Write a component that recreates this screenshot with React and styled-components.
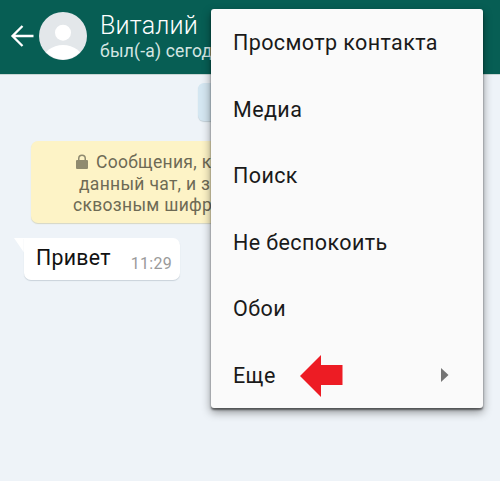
import React from "react";
import styled, { createGlobalStyle } from "styled-components";

const Global = createGlobalStyle`
  html, body { margin: 0; padding: 0; }
  body { font-family: Roboto, "Liberation Sans", sans-serif; background: #eef3f8; }
`;

const Screen = styled.div`
  position: relative;
  width: 500px;
  height: 481px;
  overflow: hidden;
  background: #eef3f8;
  display: flex;
  flex-direction: column;
`;

const Header = styled.header`
  height: 75px;
  flex: none;
  background: #075e54;
  display: flex;
  align-items: center;
  padding: 0 0 3px 10px;
  box-sizing: border-box;
  color: #fff;
  border-bottom: 1px solid #c9d6d4;
`;

const BackIcon = styled.svg`
  width: 24px;
  height: 24px;
  flex: none;
  margin-right: 5px;
`;

const AvatarIcon = styled.svg`
  width: 48px;
  height: 48px;
  flex: none;
  margin-right: 13px;
`;

const Titles = styled.div`
  display: flex;
  flex-direction: column;
  white-space: nowrap;
`;

const Name = styled.div`
  font-size: 25px;
  font-weight: 300;
  line-height: 31px;
  letter-spacing: 0.2px;
`;

const Status = styled.div`
  font-size: 17.5px;
  line-height: 21px;
  color: #d5e6e3;
  letter-spacing: 0.2px;
`;

const Chat = styled.main`
  display: flex;
  flex-direction: column;
  padding-top: 8px;
`;

const DateChip = styled.div`
  align-self: center;
  width: 104px;
  height: 38px;
  border-radius: 6px;
  background: #d4e6f1;
  box-shadow: 0 1px 1px #c3d0d8;
`;

const Notice = styled.div`
  align-self: center;
  width: 438px;
  height: 82px;
  margin-top: 20px;
  box-sizing: border-box;
  padding-top: 11px;
  border-radius: 7px;
  background: #fdf3c6;
  box-shadow: 0 1px 1px #d5d6c4;
  color: #6d6a55;
  font-size: 17.5px;
  line-height: 21.5px;
  letter-spacing: 0.3px;
  white-space: nowrap;
`;

const NoticeLine = styled.div`
  padding-left: ${(p) => p.$indent}px;
`;

const Lock = styled.svg`
  width: 12px;
  height: 15px;
  margin-right: 8px;
  vertical-align: -1px;
`;

const IncomingRow = styled.div`
  display: flex;
  margin: 15px 0 0 14px;
`;

const Tail = styled.svg`
  width: 11px;
  height: 16px;
  flex: none;
`;

const Bubble = styled.div`
  width: 156px;
  height: 42px;
  margin-left: -1px;
  box-sizing: border-box;
  padding: 0 8px 0 12px;
  background: #fff;
  border-radius: 0 7px 7px 7px;
  box-shadow: 0 1px 1px #c9d2da;
  display: flex;
  justify-content: space-between;
`;

const Message = styled.span`
  font-size: 21.3px;
  line-height: 40px;
  color: #111;
  letter-spacing: 0.3px;
`;

const Time = styled.span`
  align-self: flex-end;
  font-size: 16px;
  line-height: 32px;
  color: #9a9a9a;
  letter-spacing: 0.3px;
`;

const Menu = styled.nav`
  position: absolute;
  left: 211px;
  top: 9px;
  width: 272px;
  height: 399px;
  background: #fafafa;
  border-radius: 3px;
  box-shadow: 0 2px 2px rgba(0, 0, 0, 0.5), 0 4px 10px rgba(0, 0, 0, 0.42);
  display: grid;
  grid-auto-rows: 1fr;
`;

const MenuItem = styled.div`
  display: flex;
  align-items: center;
  justify-content: space-between;
  padding: 1px 34px 0 22px;
  font-size: 21.5px;
  letter-spacing: 0.4px;
  color: #1a1a1a;
`;

const Caret = styled.svg`
  width: 8px;
  height: 14px;
`;

const RedArrow = styled.svg`
  position: absolute;
  left: 300px;
  top: 355px;
  width: 43px;
  height: 42px;
`;

const items = ["Просмотр контакта", "Медиа", "Поиск", "Не беспокоить", "Обои"];

export default function App() {
  return (
    <Screen>
      <Global />
      <Header>
        <BackIcon viewBox="0 0 24 24" fill="none" stroke="#fff" strokeWidth="2.3">
          <path d="M23.500 12H2.500M12.500 2 2.500 12l10 10" />
        </BackIcon>
        <AvatarIcon viewBox="0 0 48 48">
          <defs>
            <clipPath id="avatar-clip">
              <circle cx="24" cy="24" r="23.5" />
            </clipPath>
          </defs>
          <circle cx="24" cy="24" r="24" fill="#e3e7ea" />
          <g clipPath="url(#avatar-clip)" fill="#fff">
            <circle cx="24" cy="20.700" r="8" />
            <ellipse cx="24" cy="48" rx="20" ry="15" />
          </g>
        </AvatarIcon>
        <Titles>
          <Name>Виталий</Name>
          <Status>был(-а) сегод</Status>
        </Titles>
      </Header>
      <Chat>
        <DateChip />
        <Notice>
          <NoticeLine $indent={45}>
            <Lock viewBox="0 0 12 15">
              <path
                d="M1 6h1V4.500a4 4 0 0 1 8 0V6h1a1 1 0 0 1 1 1v7a1 1 0 0 1-1 1H1a1 1 0 0 1-1-1V7a1 1 0 0 1 1-1zm2.500 0h5V4.500a2.500 2.500 0 0 0-5 0z"
                fill="#8f8a6f"
              />
            </Lock>
            Сообщения, к
          </NoticeLine>
          <NoticeLine $indent={48}>данный чат, и з</NoticeLine>
          <NoticeLine $indent={42}>сквозным шифр</NoticeLine>
        </Notice>
        <IncomingRow>
          <Tail viewBox="0 0 11 16">
            <path d="M0 0h11v16z" fill="#fff" />
          </Tail>
          <Bubble>
            <Message>Привет</Message>
            <Time>11:29</Time>
          </Bubble>
        </IncomingRow>
      </Chat>
      <Menu>
        {items.map((label) => (
          <MenuItem key={label}>{label}</MenuItem>
        ))}
        <MenuItem>
          Еще
          <Caret viewBox="0 0 8 14">
            <path d="M0 0l7.500 7L0 14z" fill="#757575" />
          </Caret>
        </MenuItem>
      </Menu>
      <RedArrow viewBox="0 0 43 42">
        <path d="M0 21 21 0v10h21.500v20H21v12z" fill="#ed1c24" />
      </RedArrow>
    </Screen>
  );
}
